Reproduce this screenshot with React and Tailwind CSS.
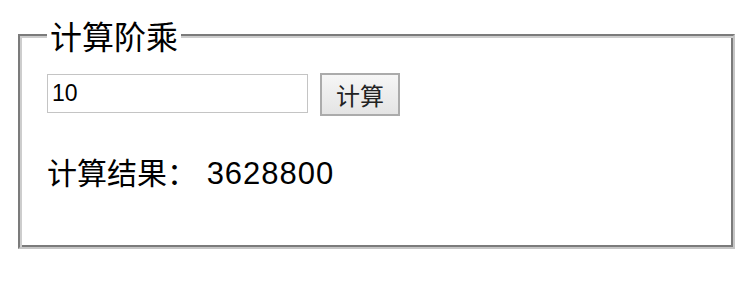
import { useState } from 'react';

// factorial of a non-negative integer, as a string so big values stay exact
function factorial(n) {
  let r = 1n;
  for (let i = 2n; i <= BigInt(n); i++) r *= i;
  return r.toString();
}

export default function App() {
  const [value, setValue] = useState('10');
  const [result, setResult] = useState(factorial(10));

  function calc() {
    const n = parseInt(value, 10);
    if (Number.isNaN(n) || n < 0) return;
    setResult(factorial(n));
  }

  return (
    <div className="w-[744px] h-[290px] bg-white pl-[18px] pt-[19px] font-['Liberation_Sans','Noto_Sans_CJK_SC',sans-serif] text-black">
      <fieldset className="w-[717px] border-2 border-t-[#7b7b7b] border-l-[#7b7b7b] border-r-[#c6c6c6] border-b-[#c6c6c6] shadow-[inset_2px_2px_0_#cdcdcd,inset_-2px_-2px_0_#7b7b7b] pl-[27px] pr-4 pt-[22px] pb-[58px]">
        <legend className="px-[3px] bg-white text-[32px] leading-[32px] font-['Noto_Sans_CJK_SC',sans-serif]">
          计算阶乘
        </legend>
        <div className="flex items-start">
          <input
            value={value}
            onChange={e => setValue(e.target.value)}
            className="mt-px w-[261px] h-[39px] border border-[#c4c4c4] px-[4px] text-[23px] outline-none"
          />
          <button
            type="button"
            onClick={calc}
            className="ml-3 w-[80px] h-[43px] border-2 border-[#ababab] bg-gradient-to-b from-[#f6f6f6] to-[#e4e4e4] text-[24px] leading-none text-[#222] font-['Noto_Sans_CJK_SC',sans-serif]"
          >
            计算
          </button>
        </div>
        <p className="mt-[40px] text-[30px] leading-[30px]">
          <span className="font-['Noto_Sans_CJK_SC',sans-serif]">计算结果：</span>
          <span className="text-[31px] tracking-[1px]"> {result}</span>
        </p>
      </fieldset>
    </div>
  );
}
